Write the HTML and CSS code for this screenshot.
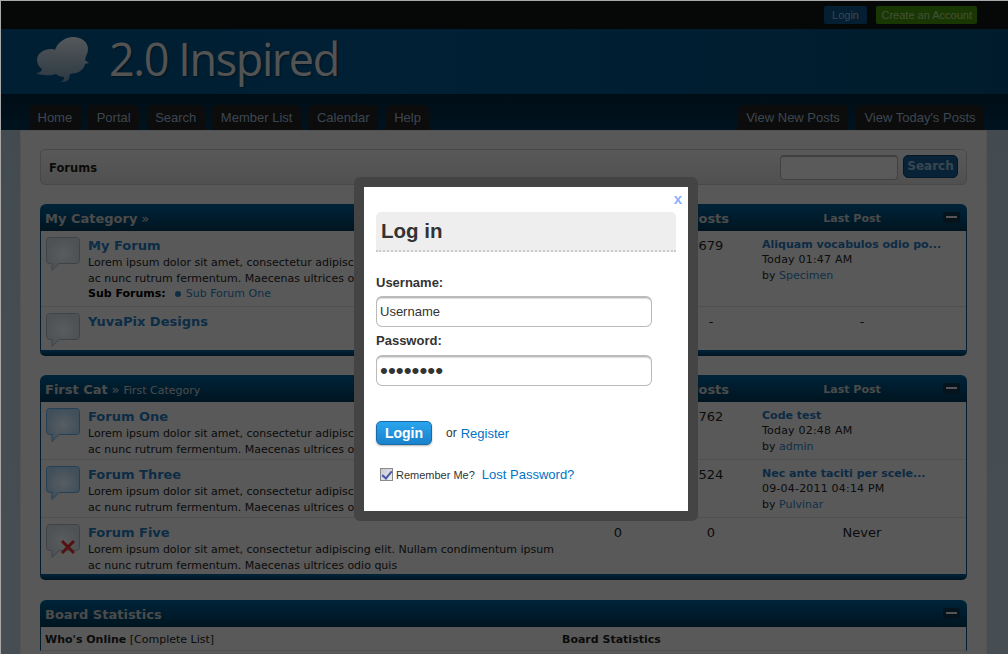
FILE: index.html
```html
<!DOCTYPE html>
<html lang="en">
<head>
<meta charset="utf-8">
<title>2.0 Inspired - Forums</title>
<link rel="stylesheet" href="styles.css">
</head>
<body>
<svg class="defs" width="0" height="0" aria-hidden="true">
  <defs>
    <radialGradient id="gr"><stop offset="0" stop-color="#e0e4e7"/><stop offset="1" stop-color="#c4ccd4"/></radialGradient>
    <radialGradient id="gb"><stop offset="0" stop-color="#dce9f3"/><stop offset="1" stop-color="#a2c6e2"/></radialGradient>
    <linearGradient id="gl" x1="0" y1="0" x2="0" y2="1"><stop offset="0" stop-color="#d4dde3"/><stop offset="1" stop-color="#6c8ca4"/></linearGradient>
    <symbol id="read" viewBox="0 0 34 34"><path d="M3.500.5h27a3 3 0 0 1 3 3v20a3 3 0 0 1-3 3H13l-7 7v-7H3.500a3 3 0 0 1-3-3v-20a3 3 0 0 1 3-3z" fill="url(#gr)" stroke="#9aaab6"/></symbol>
    <symbol id="unread" viewBox="0 0 34 34"><path d="M3.500.5h27a3 3 0 0 1 3 3v20a3 3 0 0 1-3 3H13l-7 7v-7H3.500a3 3 0 0 1-3-3v-20a3 3 0 0 1 3-3z" fill="url(#gb)" stroke="#5ea0d4"/></symbol>
  </defs>
</svg>
<div class="frame">
  <div class="topbar">
    <a class="tbtn tbtn-login">Login</a>
    <a class="tbtn tbtn-create">Create an Account</a>
  </div>
  <header class="banner">
    <svg class="logo" width="54" height="50" viewBox="0 0 54 50">
      <path fill="url(#gl)" d="M37 1c9 0 15 5 15 12 0 3-1 5-2 7l-1 4 4 3-4 1c-1 5-5 8-9 9l-6 1-1 5c-2 3-6 3-9 3 3-1 4-2 4-5-3 0-6-1-8-3-3 1-7 2-12 1-4 0-6-1-8-2 3 0 5-1 6-4-3-2-5-5-5-9 0-7 7-11 14-11 1 0 3 0 4 1 2-7 10-13 18-13z"/>
    </svg>
    <span class="brand">2.0 Inspired</span>
  </header>
  <nav class="menu">
    <a class="tab">Home</a><a class="tab">Portal</a><a class="tab">Search</a><a class="tab">Member List</a><a class="tab">Calendar</a><a class="tab">Help</a>
    <span class="menu-gap"></span>
    <a class="tab">View New Posts</a><a class="tab">View Today's Posts</a>
  </nav>
  <main class="content">
    <div class="crumbs">
      <strong class="crumb-title">Forums</strong>
      <div class="quicksearch">
        <input class="q-input" type="text" aria-label="Search">
        <button class="q-btn" type="button">Search</button>
      </div>
    </div>

    <section class="cat">
      <div class="cat-head">
        <div class="c-main"><b class="cat-name">My Category</b> <span class="cat-sep">»</span></div>
        <div class="c-num">Threads</div><div class="c-num c-posts">Posts</div><div class="c-lasthead">Last Post</div>
        <span class="collapse"></span>
      </div>
      <div class="row row-a">
        <svg class="ficon"><use href="#read"/></svg>
        <div class="c-main">
          <a class="ftitle">My Forum</a>
          <p class="fdesc">Lorem ipsum dolor sit amet, consectetur adipiscing elit. Nullam condimentum ipsum ac nunc rutrum fermentum. Maecenas ultrices odio quis</p>
          <p class="subs"><b class="subs-l">Sub Forums:</b><i class="dot"></i><a class="link">Sub Forum One</a></p>
        </div>
        <div class="c-num">1</div><div class="c-num c-posts">679</div>
        <div class="c-last"><a class="lp-title">Aliquam vocabulos odio po...</a><span class="lp lp-date">Today 01:47 AM</span><span class="lp">by <a class="link">Specimen</a></span></div>
      </div>
      <div class="row row-b">
        <svg class="ficon"><use href="#read"/></svg>
        <div class="c-main"><a class="ftitle">YuvaPix Designs</a></div>
        <div class="c-num">-</div><div class="c-num c-posts">-</div><div class="c-last c-center">-</div>
      </div>
      <div class="cat-foot"></div>
    </section>

    <section class="cat">
      <div class="cat-head">
        <div class="c-main"><b class="cat-name">First Cat</b> <span class="cat-sep">»</span> <span class="cat-sub">First Category</span></div>
        <div class="c-num">Threads</div><div class="c-num c-posts">Posts</div><div class="c-lasthead">Last Post</div>
        <span class="collapse"></span>
      </div>
      <div class="row row-c">
        <svg class="ficon"><use href="#unread"/></svg>
        <div class="c-main">
          <a class="ftitle">Forum One</a>
          <p class="fdesc">Lorem ipsum dolor sit amet, consectetur adipiscing elit. Nullam condimentum ipsum ac nunc rutrum fermentum. Maecenas ultrices odio quis</p>
        </div>
        <div class="c-num">3</div><div class="c-num c-posts">762</div>
        <div class="c-last"><a class="lp-title">Code test</a><span class="lp lp-date">Today 02:48 AM</span><span class="lp">by <a class="link">admin</a></span></div>
      </div>
      <div class="row row-c">
        <svg class="ficon"><use href="#unread"/></svg>
        <div class="c-main">
          <a class="ftitle">Forum Three</a>
          <p class="fdesc">Lorem ipsum dolor sit amet, consectetur adipiscing elit. Nullam condimentum ipsum ac nunc rutrum fermentum. Maecenas ultrices odio quis</p>
        </div>
        <div class="c-num">2</div><div class="c-num c-posts">524</div>
        <div class="c-last"><a class="lp-title">Nec ante taciti per scele...</a><span class="lp lp-date">09-04-2011 04:14 PM</span><span class="lp">by <a class="link">Pulvinar</a></span></div>
      </div>
      <div class="row row-c row-end">
        <span class="ficon-wrap">
          <svg class="ficon"><use href="#read"/></svg>
          <svg class="xmark" width="16" height="16" viewBox="0 0 16 16"><path d="M2 2l12 12M14 2L2 14" stroke="#d42a2a" stroke-width="3"/></svg>
        </span>
        <div class="c-main">
          <a class="ftitle">Forum Five</a>
          <p class="fdesc">Lorem ipsum dolor sit amet, consectetur adipiscing elit. Nullam condimentum ipsum ac nunc rutrum fermentum. Maecenas ultrices odio quis</p>
        </div>
        <div class="c-num">0</div><div class="c-num c-posts">0</div><div class="c-last c-center">Never</div>
      </div>
      <div class="cat-foot"></div>
    </section>

    <section class="cat cat-stats">
      <div class="cat-head">
        <div class="c-main"><b class="cat-name">Board Statistics</b></div>
        <span class="collapse"></span>
      </div>
      <div class="stats">
        <div class="stats-l"><b>Who's Online</b> [Complete List]</div>
        <div class="stats-r"><b>Board Statistics</b></div>
      </div>
    </section>
  </main>
  <div class="overlay"></div>
  <div class="modal">
    <div class="modal-in">
      <a class="close">x</a>
      <h2 class="m-title">Log in</h2>
      <label class="m-label m-label-first">Username:</label>
      <input class="m-input" type="text" value="Username" aria-label="Username">
      <label class="m-label">Password:</label>
      <input class="m-input m-pass" type="password" value="password" aria-label="Password">
      <div class="m-actions">
        <button class="m-btn" type="button">Login</button>
        <span class="m-or">or</span>
        <a class="m-link m-register">Register</a>
      </div>
      <div class="m-remember">
        <input class="m-check" type="checkbox" checked aria-label="Remember Me?">
        <span class="m-rem-text">Remember Me?</span>
        <a class="m-link">Lost Password?</a>
      </div>
    </div>
  </div>
</div>
</body>
</html>
```
FILE: styles.css
```css
* { box-sizing: border-box; }
html, body { margin: 0; height: 654px; overflow: hidden; background: #fff; }
p, h2 { margin: 0; }
.defs { position: absolute; }
.frame {
  position: relative; height: 654px; overflow: hidden;
  border-top: 1px solid #a8a8a8; border-left: 1px solid #a8a8a8;
  font-family: "DejaVu Sans", Verdana, sans-serif; font-size: 11px; color: #222;
  background: linear-gradient(#a6bac9, #b2c4d0);
}
.topbar { height: 28px; background: #0f1414; display: flex; align-items: center; justify-content: flex-end; gap: 9px; padding: 0 31px 0 0; }
.tbtn { font: 11px/18px "Liberation Sans", Arial, sans-serif; height: 18px; border-radius: 2px; }
.tbtn-login { background: #0a4e7e; color: #8eaec6; padding: 0 8.5px; }
.tbtn-create { background: #3f8a08; color: #a4c88c; padding: 0 5px; }
.banner { height: 65px; background: linear-gradient(90deg, #024e7e, #025084 40%, #02486f); display: flex; align-items: center; padding: 0 0 5px 35px; gap: 19px; }
.logo { flex: none; margin-top: 3px; }
.brand { font: 45px/54px "Open Sans", sans-serif; letter-spacing: -1.4px; color: #cfcfcf; text-shadow: 1px 1px 2px rgba(0,0,0,.4); }
.menu { height: 36px; background: linear-gradient(#002238, #00304c); display: flex; align-items: flex-end; gap: 7.5px; padding: 0 24px 0 28px; }
.menu-gap { flex: 1; }
.tab { font: 13px/25px "Liberation Sans", Arial, sans-serif; height: 25px; padding: 0 8.5px; background: #1e1e1e; color: #93b0c8; border-radius: 5px 5px 0 0; }
.content { width: 967px; margin-left: 19px; height: 530px; background: #dcdcdc; padding: 18px 19px 0; display: flex; flex-direction: column; gap: 19px; border: solid #d0d0d0; border-width: 1px 1px 0; }
.crumbs { flex: none; height: 36px; border: 1px solid #b4b4b4; border-radius: 5px; background: linear-gradient(#dedede, #c8c8c8); display: flex; align-items: center; justify-content: space-between; padding: 1px 8px 0; }
.crumb-title { font-size: 11.5px; color: #1c1c1c; }
.quicksearch { display: flex; align-items: center; gap: 5px; margin-top: -1px; }
.q-input { width: 118px; height: 25px; border: 1px solid #a0a0a0; border-top-width: 2px; border-radius: 4px; background: #e0e0e0; margin: 1px 0 0; }
.q-btn { width: 55px; height: 23px; font: bold 12px "DejaVu Sans", sans-serif; border: 1px solid #083a60; border-radius: 5px; background: #14598c; color: #8fb0c6; padding: 0; margin: 0 0 2px; }
.cat { flex: none; position: relative; border-radius: 6px 6px 5px 5px; }
.cat-stats { margin-top: 1px; }
.cat-head { height: 27px; background: linear-gradient(#025a90, #003450); border-radius: 6px 6px 0 0; display: flex; align-items: center; color: #bcbcbc; font-weight: bold; font-size: 11px; padding: 2px 0 0 48px; }
.cat-head .c-main { margin-left: -43px; width: 527px; flex: none; }
.cat-head .c-num { width: 92px; flex: none; text-align: center; }
.cat-head .c-posts { width: 92px; margin-left: -1px; }
.c-lasthead { width: 186px; text-align: center; margin-left: 4px; }
.cat-name { font-size: 13px; }
.cat-sep { font-weight: normal; font-size: 13px; }
.cat-sub { font-weight: normal; font-size: 11px; }
.collapse { position: absolute; right: 7px; top: 8px; width: 17px; height: 11px; background: #0c3048; border-radius: 3px; }
.collapse::after { content: ""; position: absolute; left: 3px; right: 3px; top: 4px; height: 2px; background: #d8d8d8; }
.row { display: flex; align-items: flex-start; background: #dedede; border: solid #064a78; border-width: 0 1px; padding-left: 5px; box-shadow: inset 0 -1px 0 #c8c8c8; font-size: 11px; }
.row-a { height: 76px; padding-top: 6px; }
.row-b { height: 43px; padding-top: 6px; box-shadow: none; }
.row-c { height: 58px; padding-top: 6px; }
.row-end { height: 56px; box-shadow: none; }
.ficon { width: 34px; height: 34px; flex: none; display: block; }
.ficon-wrap { position: relative; flex: none; width: 34px; height: 34px; }
.xmark { position: absolute; left: 14px; top: 15px; }
.c-main { width: 484px; margin-left: 8px; flex: none; }
.c-num { width: 92px; flex: none; text-align: center; font-size: 13px; line-height: 16px; }
.c-posts { width: 94px; }
.row .c-num { padding-top: 1px; }
.c-last { flex: 1; padding-left: 4px; min-width: 0; line-height: 15px; }
.c-center { text-align: center; padding-left: 0; font-size: 13px; padding-top: 1px; line-height: 16px; }
.ftitle { display: block; font: bold 13px/18px "DejaVu Sans", sans-serif; color: #1f70b0; }
.fdesc { line-height: 16px; width: 470px; }
.subs { line-height: 15px; margin-top: -1px; }
.subs-l { color: #000; font-size: 11px; }
.dot { display: inline-block; width: 6px; height: 6px; border-radius: 50%; background: #2674b0; margin: 0 5px 0 9px; vertical-align: 0; }
.link { color: #2a78b4; }
.lp-title { display: block; font-weight: bold; color: #1f6cac; line-height: 15px; }
.lp { display: block; line-height: 16px; }
.lp-date { letter-spacing: .2px; }
.cat-foot { height: 6px; background: linear-gradient(#025a90, #003450); border-radius: 0 0 5px 5px; }
.stats { display: flex; height: 24px; background: #dedede; border: solid #064a78; border-width: 0 1px; border-bottom: 1px solid #c8c8c8; padding: 6px 4px 0; line-height: 14px; color: #1c1c1c; }
.stats-l { width: 517px; }
.overlay { position: absolute; inset: 0; background: rgba(0,0,0,.6); }
.modal { position: absolute; left: 353px; top: 176px; width: 344px; height: 344px; padding: 10px; background: #444; border-radius: 6px; font-family: "Liberation Sans", Arial, sans-serif; font-size: 13px; color: #333; }
.modal-in { position: relative; height: 324px; background: #fff; padding: 25px 12px 0; }
.close { position: absolute; right: 6px; top: 3px; font: bold 15px/18px "Liberation Sans", Arial, sans-serif; color: #8ab0ff; }
.m-title { height: 40px; font-size: 20.5px; line-height: 37px; padding-left: 5px; background: #eee; border-radius: 5px 5px 0 0; border-bottom: 2px dotted #ccc; color: #333; }
.m-label { display: block; font-weight: bold; font-size: 13px; line-height: 16px; margin: 6px 0 6px; }
.m-label-first { margin: 23px 0 5px; }
.m-input { display: block; width: 276px; height: 31px; border: 1px solid #bbb; border-top: 2px solid #bbb; border-radius: 6px; padding: 0 3px 2px; font: 13px "Liberation Sans", Arial, sans-serif; color: #333; background: #fff; box-shadow: inset 0 1px 1px #ddd; outline: none; }
.m-pass { font-size: 22.5px; padding-bottom: 0; }
.m-actions { display: flex; align-items: center; margin-top: 35px; height: 24px; }
.m-btn { width: 56px; height: 24px; border: 1px solid #1a6aa5; border-radius: 5px; background: linear-gradient(#2aa4ee, #1a82cc); color: #fff; font: bold 14px "Liberation Sans", Arial, sans-serif; padding: 0; box-shadow: 0 1px 2px rgba(0,0,0,.3); }
.m-or { margin-left: 14px; font-size: 12px; }
.m-register { margin-left: 4px; }
.m-link { color: #0072c6; font-size: 13px; }
.m-remember { display: flex; align-items: center; margin-top: 20px; padding-left: 4px; height: 18px; }
.m-check { appearance: none; position: relative; width: 13px; height: 13px; margin: 0 3px 0 0; flex: none; border: 1px solid #8a8a8a; background: linear-gradient(135deg, #c8c8d4, #eeeef4); }
.m-check::after { content: ""; position: absolute; left: 3px; top: 0; width: 4px; height: 8px; border: solid #4a5aa8; border-width: 0 2px 2px 0; transform: rotate(40deg); }
.m-rem-text { font-size: 11px; line-height: 18px; padding-top: 1px; }
.m-remember .m-link { margin-left: 7px; }
```
